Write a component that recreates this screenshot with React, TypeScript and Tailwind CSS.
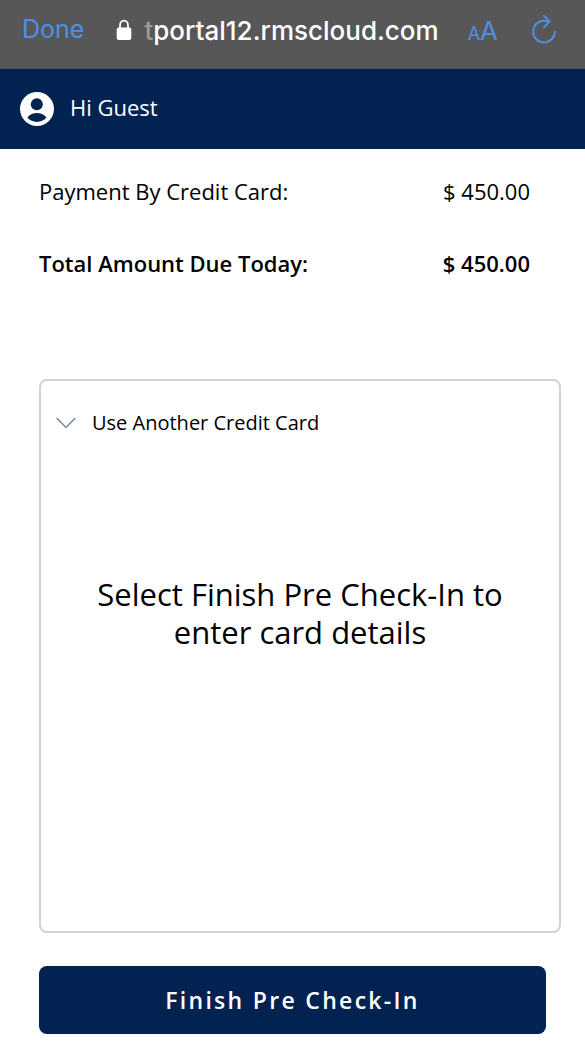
import React from 'react';

const LockIcon: React.FC = () => (
    <svg viewBox="0 0 16 22" className="w-4 h-[22px] shrink-0" aria-hidden="true">
        <path d="M4 11V6.2a4 4.6 0 0 1 8 0V11" fill="none" stroke="#fff" strokeWidth="1.8" />
        <rect x="0.7" y="8.5" width="14.6" height="12.5" rx="2" fill="#fff" />
    </svg>
);

const ReloadIcon: React.FC = () => (
    <svg viewBox="0 0 24 30" className="w-6 h-[30px]" fill="none" stroke="currentColor" strokeWidth="2" strokeLinecap="round" strokeLinejoin="round" aria-hidden="true">
        <path d="M22.8 16.4a10.8 10.8 0 1 1-10.8-10.6c1.8 0 3.4.2 4.9.6" />
        <path d="M12 1l5.6 5.4-5.6 5.8" />
    </svg>
);

const AccountIcon: React.FC = () => (
    <svg viewBox="0 0 34 34" className="w-[34px] h-[34px] shrink-0" aria-hidden="true">
        <circle cx="17" cy="17" r="17" fill="#fff" />
        <circle cx="16.8" cy="12.2" r="6" fill="#022251" />
        <path d="M7.3 25.6c2.5-3.1 6-4.5 9.6-4.5s7.1 1.4 9.6 4.5c-2.6 2.9-6 4.3-9.6 4.3s-7-1.4-9.6-4.3z" fill="#022251" />
    </svg>
);

const ChevronIcon: React.FC = () => (
    <svg viewBox="0 0 20 12" className="w-5 h-3 shrink-0" fill="none" stroke="#73869f" strokeWidth="1.4" aria-hidden="true">
        <path d="M.7 1l9.3 9.4L19.3 1" />
    </svg>
);

interface AmountRowProps {
    label: string;
    amount: string;
    bold?: boolean;
}

const AmountRow: React.FC<AmountRowProps> = ({ label, amount, bold }) => (
    <div className={bold ? 'flex justify-between font-semibold' : 'flex justify-between'}>
        <dt>{label}</dt>
        <dd>{amount}</dd>
    </div>
);

const BrowserBar: React.FC = () => (
    <div className="flex items-center h-[69px] pb-2 pl-[22px] pr-[29px] bg-[#575757] border-b border-[#4c5668] font-['Inter',sans-serif] text-[#4f8fe6]">
        <button type="button" className="mr-8 text-[25px]">Done</button>
        <LockIcon />
        <span className="ml-3 text-[26px] font-medium text-white">
            <span className="text-[#9a9a9a]">t</span>portal12.rmscloud.com
        </span>
        <button type="button" aria-label="Text size" className="flex items-baseline ml-auto">
            <span className="text-lg">A</span>
            <span className="text-[26px]">A</span>
        </button>
        <button type="button" aria-label="Reload" className="ml-[34px]">
            <ReloadIcon />
        </button>
    </div>
);

export default function App() {
    return (
        <div className="bg-white text-black font-['Open_Sans',sans-serif]">
            <BrowserBar />

            <header className="flex items-center gap-4 h-20 px-5 bg-[#022251] text-[22px] text-white">
                <AccountIcon />
                <span className="pb-1">Hi Guest</span>
            </header>

            <main className="pl-[39px] pr-6 pt-[26px] pb-3">
                <dl className="flex flex-col gap-10 pr-[31px] text-[22px] leading-8">
                    <AmountRow label="Payment By Credit Card:" amount="$ 450.00" />
                    <AmountRow label="Total Amount Due Today:" amount="$ 450.00" bold />
                </dl>

                <section className="mt-[100px] min-h-[554px] border-2 border-[#d2d2d2] rounded-lg px-[15px] pt-[26px]">
                    <button type="button" className="flex items-center gap-4 text-xl leading-8">
                        <ChevronIcon />
                        Use Another Credit Card
                    </button>
                    <p className="mt-[136px] px-8 text-center text-[31px] leading-[38px]">
                        Select Finish Pre Check-In to enter card details
                    </p>
                </section>

                <div className="mt-[33px] pr-[15px]">
                    <button type="button" className="w-full h-[68px] rounded-lg bg-[#022251] text-[23px] font-semibold tracking-widest text-white">
                        Finish Pre Check-In
                    </button>
                </div>
            </main>
        </div>
    );
}
